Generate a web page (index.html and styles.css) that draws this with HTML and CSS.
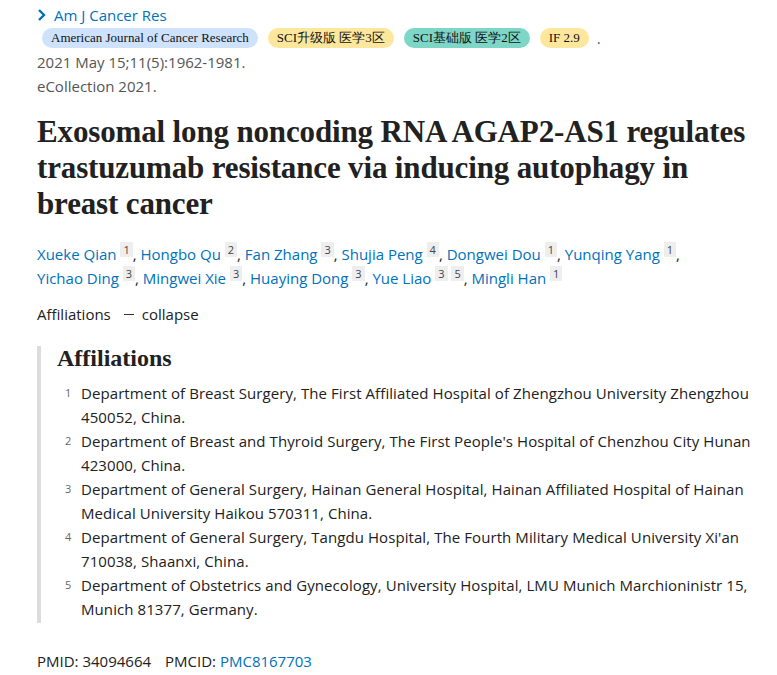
FILE: index.html
```html
<!DOCTYPE html>
<html>
<head>
<meta charset="utf-8">
<link rel="stylesheet" href="styles.css">
</head>
<body>
<main class="page">
  <div class="journal">
    <svg class="chev" width="10" height="14" viewBox="0 0 10 14"><path d="M2 2 L7 7 L2 12" fill="none" stroke="#0071bc" stroke-width="2.4"/></svg>
    <a class="jlink">Am J Cancer Res</a>
  </div>
  <div class="badges">
    <span class="badge b-blue">American Journal of Cancer Research</span>
    <span class="badge b-yellow">SCI升级版 医学3区</span>
    <span class="badge b-teal">SCI基础版 医学2区</span>
    <span class="badge b-yellow">IF 2.9</span>
    <span class="dot">.</span>
  </div>
  <div class="cite">2021 May 15;11(5):1962-1981.</div>
  <div class="cite">eCollection 2021.</div>

  <h1 class="title">Exosomal long noncoding RNA AGAP2-AS1 regulates trastuzumab resistance via inducing autophagy in breast cancer</h1>

  <div class="authors">
    <a>Xueke Qian</a> <sup>1</sup>, <a>Hongbo Qu</a> <sup>2</sup>, <a>Fan Zhang</a> <sup>3</sup>, <a>Shujia Peng</a> <sup>4</sup>, <a>Dongwei Dou</a> <sup>1</sup>, <a>Yunqing Yang</a> <sup>1</sup>,<br>
    <a>Yichao Ding</a> <sup>3</sup>, <a>Mingwei Xie</a> <sup>3</sup>, <a>Huaying Dong</a> <sup>3</sup>, <a>Yue Liao</a> <sup>3</sup> <sup>5</sup>, <a>Mingli Han</a> <sup>1</sup>
  </div>

  <div class="aff-toggle"><span>Affiliations</span><span class="dash"></span><span>collapse</span></div>

  <section class="aff-box">
    <h2 class="aff-head">Affiliations</h2>
    <ul class="aff-list">
      <li><span class="num">1</span><span class="txt">Department of Breast Surgery, The First Affiliated Hospital of Zhengzhou University Zhengzhou 450052, China.</span></li>
      <li><span class="num">2</span><span class="txt">Department of Breast and Thyroid Surgery, The First People's Hospital of Chenzhou City Hunan 423000, China.</span></li>
      <li><span class="num">3</span><span class="txt">Department of General Surgery, Hainan General Hospital, Hainan Affiliated Hospital of Hainan Medical University Haikou 570311, China.</span></li>
      <li><span class="num">4</span><span class="txt">Department of General Surgery, Tangdu Hospital, The Fourth Military Medical University Xi'an 710038, Shaanxi, China.</span></li>
      <li><span class="num">5</span><span class="txt">Department of Obstetrics and Gynecology, University Hospital, LMU Munich Marchioninistr 15, Munich 81377, Germany.</span></li>
    </ul>
  </section>

  <div class="ids">PMID: 34094664<span class="gap"></span>PMCID: <a>PMC8167703</a></div>
</main>
</body>
</html>
```

FILE: styles.css
```css
* { box-sizing: border-box; }
html, body { margin: 0; padding: 0; background: #fff; }
body {
  font-family: "Open Sans", "Noto Sans", sans-serif;
  font-size: 15px;
  color: #212121;
}
.page { padding: 4px 20px 0 37px; }
a { color: #0071bc; text-decoration: none; }

.journal { display: flex; align-items: center; gap: 7px; height: 22px; }
.chev { display: block; }
.jlink { font-size: 15px; }

.badges { display: flex; align-items: center; height: 24px; padding-left: 5px; }
.badge {
  font-family: "Liberation Serif", serif;
  font-size: 13px;
  color: #111;
  border-radius: 10px;
  height: 20px;
  line-height: 20px;
  padding: 0 9px;
  margin-right: 10px;
}
.b-blue { background: #cfe2fb; }
.b-yellow { background: #fde79c; }
.b-teal { background: #7dd6c6; }
.dot { color: #0071bc; font-size: 15px; margin-left: -2px; }

.cite { color: #555; height: 24px; line-height: 24px; }

.title {
  font-family: "Liberation Serif", serif;
  font-weight: bold;
  font-size: 31px;
  line-height: 36px;
  margin: 16px 0 0 0;
  color: #212121;
  letter-spacing: -0.15px;
}

.authors { margin-top: 20px; line-height: 24px; color: #212121; }
.authors sup {
  font-size: 11px;
  color: #444;
  background: #eee;
  padding: 0 3px;
  vertical-align: 6px;
  line-height: 14px;
}

.aff-toggle { margin-top: 12px; display: flex; align-items: center; height: 24px; }
.dash { width: 10px; height: 1px; background: #333; margin: 0 8px 0 13px; }

.aff-box {
  margin-top: 20px;
  border-left: 4px solid #dcdcdc;
  padding: 0 0 2px 16px;
}
.aff-head {
  font-family: "Liberation Serif", serif;
  font-weight: bold;
  font-size: 24px;
  line-height: 24px;
  margin: 0 0 11px 0;
  color: #212121;
}
.aff-list { list-style: none; margin: 0; padding: 0; letter-spacing: 0.08px; }
.aff-list li { display: flex; line-height: 24px; }
.num { width: 24px; flex: none; font-size: 11px; color: #666; padding-left: 8px; }
.txt { flex: 1; }

.ids { margin-top: 26px; line-height: 24px; }
.gap { display: inline-block; width: 14px; }
```
